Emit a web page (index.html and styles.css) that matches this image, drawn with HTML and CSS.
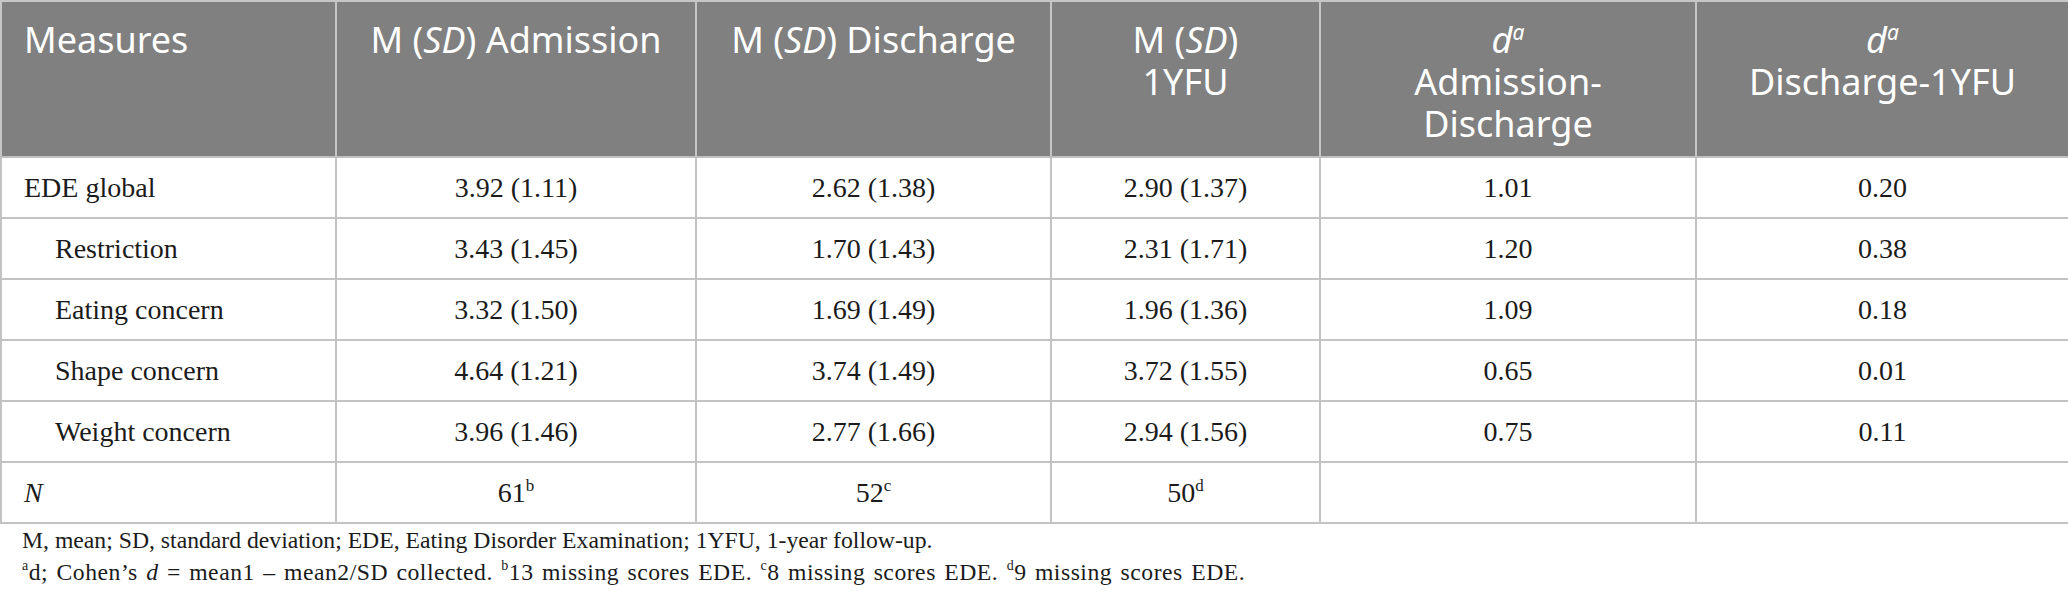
FILE: index.html
```html
<!DOCTYPE html>
<html lang="en">
<head>
<meta charset="utf-8">
<title>EDE scores</title>
<link rel="stylesheet" href="styles.css">
</head>
<body>
<div class="wrap">
  <table class="data">
    <colgroup>
      <col class="c1"><col class="c2"><col class="c3"><col class="c4"><col class="c5"><col class="c6">
    </colgroup>
    <thead>
      <tr>
        <th class="left">Measures</th>
        <th>M (<i>SD</i>) Admission</th>
        <th>M (<i>SD</i>) Discharge</th>
        <th>M (<i>SD</i>)<br>1YFU</th>
        <th><i>d</i><sup><i>a</i></sup><br>Admission-<br>Discharge</th>
        <th><i>d</i><sup><i>a</i></sup><br>Discharge-1YFU</th>
      </tr>
    </thead>
    <tbody>
      <tr><td class="left">EDE global</td><td>3.92 (1.11)</td><td>2.62 (1.38)</td><td>2.90 (1.37)</td><td>1.01</td><td>0.20</td></tr>
      <tr><td class="left sub">Restriction</td><td>3.43 (1.45)</td><td>1.70 (1.43)</td><td>2.31 (1.71)</td><td>1.20</td><td>0.38</td></tr>
      <tr><td class="left sub">Eating concern</td><td>3.32 (1.50)</td><td>1.69 (1.49)</td><td>1.96 (1.36)</td><td>1.09</td><td>0.18</td></tr>
      <tr><td class="left sub">Shape concern</td><td>4.64 (1.21)</td><td>3.74 (1.49)</td><td>3.72 (1.55)</td><td>0.65</td><td>0.01</td></tr>
      <tr><td class="left sub">Weight concern</td><td>3.96 (1.46)</td><td>2.77 (1.66)</td><td>2.94 (1.56)</td><td>0.75</td><td>0.11</td></tr>
      <tr><td class="left"><i>N</i></td><td>61<sup>b</sup></td><td>52<sup>c</sup></td><td>50<sup>d</sup></td><td></td><td></td></tr>
    </tbody>
  </table>
  <div class="notes">
    <p>M, mean; SD, standard deviation; EDE, Eating Disorder Examination; 1YFU, 1-year follow-up.</p>
    <p class="wide"><sup>a</sup>d; Cohen’s <i>d</i> = mean1 – mean2/SD collected. <sup>b</sup>13 missing scores EDE. <sup>c</sup>8 missing scores EDE. <sup>d</sup>9 missing scores EDE.</p>
  </div>
</div>
</body>
</html>
```

FILE: styles.css
```css
html, body {
  margin: 0;
  padding: 0;
  background: #ffffff;
}

.wrap {
  width: 2068px;
}

.data {
  width: 2068px;
  border-collapse: collapse;
  table-layout: fixed;
  font-family: "Liberation Serif", "Times New Roman", serif;
  color: #1b1b1b;
}

.c1 { width: 335px; }
.c2 { width: 360px; }
.c3 { width: 355px; }
.c4 { width: 269px; }
.c5 { width: 376px; }
.c6 { width: 373px; }

.data th {
  box-sizing: border-box;
  height: 156px;
  background: #7f807f;
  color: #ffffff;
  font-family: "Noto Sans", "Open Sans", sans-serif;
  font-weight: 400;
  font-size: 36px;
  line-height: 42px;
  text-align: center;
  vertical-align: top;
  padding: 17px 12px 0;
  border: 2px solid #c6c6c6;
  border-bottom: 2px solid #c0c0c0;
}

.data thead th + th {
  border-left: 2px solid #a3a4a3;
}

.data th.left {
  text-align: left;
  padding-left: 22px;
}

.data th sup {
  font-size: 21px;
  line-height: 0;
  vertical-align: 13px;
}

.data td {
  box-sizing: border-box;
  height: 61px;
  font-size: 28px;
  line-height: 32px;
  text-align: center;
  vertical-align: middle;
  padding: 0 14px;
  border: 2px solid #c3c3c3;
}

.data td.left {
  text-align: left;
  padding-left: 22px;
}

.data td.sub {
  padding-left: 53px;
}

.data td sup {
  font-size: 17px;
  line-height: 0;
  vertical-align: 11px;
}

.notes {
  font-family: "Liberation Serif", "Times New Roman", serif;
  font-size: 23.7px;
  line-height: 32px;
  color: #1b1b1b;
  padding-left: 22px;
}

.notes p {
  margin: 0;
}

.notes p.wide {
  letter-spacing: 0.5px;
  word-spacing: 2px;
}

.notes sup {
  font-size: 14px;
  line-height: 0;
  vertical-align: 10px;
}
```
